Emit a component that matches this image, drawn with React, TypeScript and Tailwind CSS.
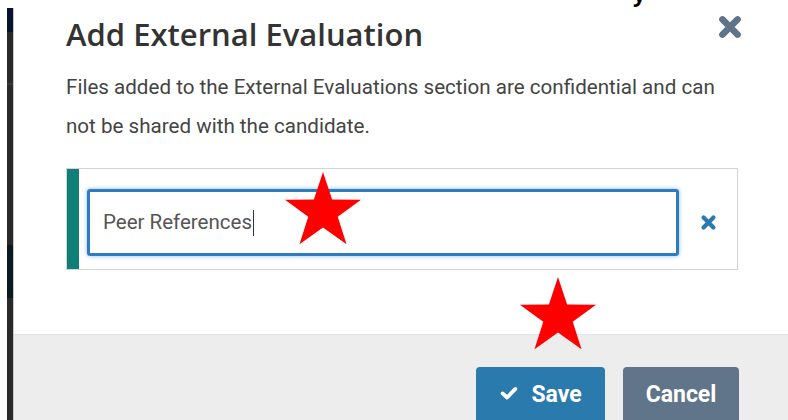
import { Fragment } from "react";

const Star = ({ className }: { className: string }) => {
  // five-point star, outer radius 40, inner radius 16
  const pts: string[] = [];
  for (let i = 0; i < 10; i++) {
    const r = i % 2 === 0 ? 40 : 15.5;
    const a = (Math.PI / 5) * i - Math.PI / 2;
    pts.push(`${(40 + r * Math.cos(a)).toFixed(2)},${(40 + r * Math.sin(a)).toFixed(2)}`);
  }
  return (
    <svg viewBox="0 0 80 80" className={className}>
      <polygon points={pts.join(" ")} fill="#ff0000" />
    </svg>
  );
};

const CloseIcon = ({ className }: { className: string }) => (
  <svg viewBox="0 0 24 24" className={className} fill="none" stroke="currentColor" strokeLinecap="round">
    <path d="M5 5 L19 19 M19 5 L5 19" strokeWidth="6" />
  </svg>
);

const CheckIcon = () => (
  <svg viewBox="0 0 24 24" className="h-[18px] w-[20px]" fill="none" stroke="currentColor" strokeLinecap="round" strokeLinejoin="round">
    <path d="M3.5 12.5 L9.5 18 L20.5 6.5" strokeWidth="5" />
  </svg>
);

const App = () => {
  return (
    <Fragment>
      <div className="relative flex h-[420px] w-[788px] overflow-hidden bg-white">
        <span className="absolute left-[633px] top-[-22px] text-[22px] font-bold leading-[30px] text-black [font-family:'Open_Sans',sans-serif]">
          y
        </span>

        {/* dark page edge behind the dialog */}
        <div className="flex pl-[7px] pt-[8px]">
          <div className="flex w-[6px] flex-col">
            <div className="h-[24px] bg-[#08142c]" />
            <div className="h-[51px] bg-[#2a2a2a]" />
            <div className="h-[2px] bg-[#3a3a3a]" />
            <div className="h-[160px] bg-[#2a2a2a]" />
            <div className="h-[53px] bg-[#0b1a22]" />
            <div className="flex-1 bg-[#2a2a2a]" />
          </div>
          <div className="w-[1px] bg-[#c8c8c8]" />
        </div>

        <div className="flex flex-1 flex-col [font-family:Roboto,sans-serif]">
          <div className="flex h-[334px] shrink-0 flex-col pl-[52px] pr-[50px]">
            <div className="flex items-start justify-between pt-[13px]">
              <h2 className="text-[31px] font-semibold leading-[42px] text-[#333333] [font-family:'Open_Sans',sans-serif]">
                Add External Evaluation
              </h2>
              <button className="mr-[-5px] mt-[1px] text-[#5f7488]">
                <CloseIcon className="h-[26px] w-[26px]" />
              </button>
            </div>
            <p className="mt-[13px] text-[20.6px] leading-[39px] text-[#444444]">
              Files added to the External Evaluations section are confidential and can
              <br />
              not be shared with the candidate.
            </p>

            <div className="mt-[22px] flex h-[102px] shrink-0 border border-[#d4d4d4]">
              <div className="w-[12px] bg-[#107f78]" />
              <div className="flex flex-1 items-start pl-[8px] pr-[20px] pt-[20px]">
                <div className="flex h-[67px] flex-1 items-center rounded-[3px] border-[3px] border-[#2e7cc0] pl-[13px] shadow-[0_0_4px_#8ab8ec]">
                  <span className="text-[20.5px] text-[#555555]">Peer References</span>
                  <span className="ml-[1px] h-[26px] w-[1px] bg-[#333333]" />
                </div>
                <button className="ml-[21px] mt-[25px] text-[#2a7aaf]">
                  <CloseIcon className="h-[17px] w-[17px]" />
                </button>
              </div>
            </div>
          </div>

          <div className="flex flex-1 justify-end gap-[18px] border-t border-[#e4e4e4] bg-[#ededed] pr-[49px] pt-[32px]">
            <button className="flex h-[60px] w-[129px] items-start justify-center gap-[12px] rounded-[4px] bg-[#2a7aad] pt-[11px] text-[23px] font-bold text-white">
              <span className="mt-[6px]">
                <CheckIcon />
              </span>
              Save
            </button>
            <button className="flex h-[60px] w-[116px] items-start justify-center rounded-[4px] bg-[#60758a] pt-[11px] text-[23px] font-bold text-white">
              Cancel
            </button>
          </div>
        </div>

        <Star className="absolute left-[283px] top-[172px] h-[80px] w-[80px]" />
        <Star className="absolute left-[518px] top-[277px] h-[80px] w-[80px]" />
      </div>
    </Fragment>
  );
};

export default App;
